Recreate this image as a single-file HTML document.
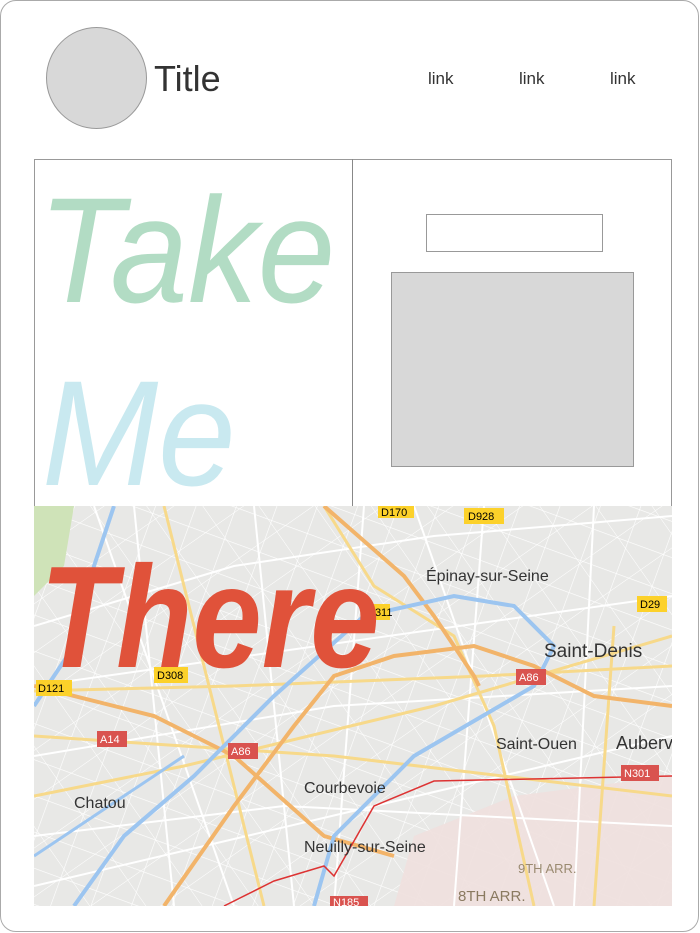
<!DOCTYPE html>
<html><head><meta charset="utf-8"><style>
html,body{margin:0;padding:0;background:#fff;}
body{width:700px;height:933px;position:relative;overflow:hidden;font-family:"Liberation Sans",sans-serif;}
.card{position:absolute;left:0;top:0;width:697px;height:930px;border:1px solid #aaa;border-radius:16px;}
.circ{position:absolute;left:46px;top:27px;width:99px;height:100px;border-radius:50%;background:#d8d8d8;border:1px solid #999;}
.title{position:absolute;left:154px;top:58px;font-size:36px;color:#333;}
.link{position:absolute;top:69px;font-size:17px;color:#333;}
.grid{position:absolute;left:34px;top:159px;width:636px;height:347px;border:1px solid #999;border-bottom:none;}
.div{position:absolute;left:352px;top:159px;width:1px;height:347px;background:#888;}
.inp{position:absolute;left:426px;top:214px;width:175px;height:36px;border:1px solid #999;}
.gbox{position:absolute;left:391px;top:272px;width:241px;height:193px;background:#d8d8d8;border:1px solid #999;}
.big{position:absolute;font-style:italic;white-space:nowrap;line-height:1;}
.map{position:absolute;left:34px;top:506px;}
</style></head><body>
<div class="card"></div>
<div class="circ"></div>
<div class="title">Title</div>
<div class="link" style="left:428px">link</div>
<div class="link" style="left:519px">link</div>
<div class="link" style="left:610px">link</div>
<div class="grid"></div>
<div class="div"></div>
<div class="inp"></div>
<div class="gbox"></div>
<div class="big" style="left:38px;top:175px;font-size:150px;color:#b2dcc4;transform:scaleX(0.93);transform-origin:left;">Take</div>
<div class="big" style="left:42px;top:358px;font-size:150px;color:#c9e9f0;transform:scaleX(0.93);transform-origin:left;">Me</div>
<svg class="map" width="638" height="400" viewBox="0 0 638 400">
<defs>
<pattern id="st" width="38" height="34" patternUnits="userSpaceOnUse" patternTransform="rotate(20)">
<path d="M0 0 L38 0 M0 0 L0 34" stroke="#fff" stroke-width="1.2" fill="none"/>
</pattern>
<pattern id="st2" width="46" height="40" patternUnits="userSpaceOnUse" patternTransform="rotate(-35)">
<path d="M0 0 L46 0 M0 0 L0 40" stroke="#fff" stroke-width="1" fill="none"/>
</pattern>
</defs>
<rect width="638" height="400" fill="#e8e8e6"/>
<rect width="638" height="400" fill="url(#st)"/>
<rect width="638" height="400" fill="url(#st2)"/>
<path d="M0 0 L40 0 L30 60 L0 90Z" fill="#cfe3b8"/>
<path d="M380 330 L480 290 L638 270 L638 400 L360 400Z" fill="#f0e0de" opacity="0.9"/>
<g stroke="#fff" stroke-width="2" fill="none">
<path d="M0 120 L200 60 L400 30 L638 10"/><path d="M0 250 L300 200 L638 180"/><path d="M0 330 L250 300 L638 320"/>
<path d="M100 0 L140 400"/><path d="M220 0 L260 400"/><path d="M330 0 L300 400"/><path d="M450 0 L420 400"/><path d="M560 0 L540 400"/>
<path d="M0 180 L638 90"/><path d="M0 380 L638 230"/><path d="M60 0 L200 400"/><path d="M380 0 L520 400"/>
</g>
<g stroke="#f7d98a" stroke-width="3" fill="none">
<path d="M0 185 L200 180 L450 170 L638 160"/><path d="M0 230 L300 250 L638 290"/><path d="M130 0 L180 200 L230 400"/>
<path d="M290 0 L340 80 L420 130 L460 220 L500 400"/><path d="M0 290 L150 260 L400 200 L638 130"/><path d="M580 120 L560 400"/>
</g>
<g stroke="#f2b46a" stroke-width="4" fill="none">
<path d="M0 180 L120 210 L200 250 L290 330 L360 350"/><path d="M130 400 L200 300 L260 220 L300 170 L360 150 L440 140 L500 160 L560 190 L638 200"/>
<path d="M290 0 L370 70 L400 110 L440 170 L445 180"/>
</g>
<path d="M80 0 L60 60 L40 140 L0 200" stroke="#9cc5f0" stroke-width="4" fill="none"/>
<path d="M40 400 L90 330 L160 270 L240 190 L330 110 L420 90 L480 100 L520 140 L500 180 L380 250 L300 330 L280 400" stroke="#9cc5f0" stroke-width="4" fill="none"/>
<path d="M0 350 L150 250" stroke="#9cc5f0" stroke-width="3" fill="none"/>
<path d="M190 400 L240 375 L290 360 L300 370 L340 300 L400 275 L638 270" stroke="#d33" stroke-width="1.5" fill="none"/>
<g font-family="Liberation Sans,sans-serif" font-size="16" fill="#333">
<text x="392" y="75">Épinay-sur-Seine</text><text x="510" y="151" font-size="19">Saint-Denis</text>
<text x="462" y="243">Saint-Ouen</text><text x="582" y="243" font-size="18">Auberv</text>
<text x="270" y="287">Courbevoie</text><text x="40" y="302">Chatou</text><text x="270" y="346">Neuilly-sur-Seine</text>
<text x="484" y="367" font-size="13" fill="#9a8a70">9TH ARR.</text><text x="424" y="395" font-size="15" fill="#8a7a60">8TH ARR.</text>
</g>
<g font-family="Liberation Sans,sans-serif" font-size="11">
<rect x="344" y="0" width="36" height="12" fill="#fcd12a"/><text x="347" y="10">D170</text>
<rect x="430" y="2" width="40" height="16" fill="#fcd12a"/><text x="434" y="14">D928</text>
<rect x="603" y="90" width="30" height="16" fill="#fcd12a"/><text x="606" y="102">D29</text>
<rect x="120" y="161" width="34" height="16" fill="#fcd12a"/><text x="123" y="173">D308</text>
<rect x="2" y="174" width="36" height="16" fill="#fcd12a"/><text x="4" y="186">D121</text>
<rect x="330" y="98" width="26" height="16" fill="#fcd12a"/><text x="333" y="110">D311</text>
<rect x="482" y="163" width="30" height="16" fill="#d9534f"/><text x="485" y="175" fill="#fff">A86</text>
<rect x="63" y="225" width="30" height="16" fill="#d9534f"/><text x="66" y="237" fill="#fff">A14</text>
<rect x="194" y="237" width="30" height="16" fill="#d9534f"/><text x="197" y="249" fill="#fff">A86</text>
<rect x="587" y="259" width="38" height="16" fill="#d9534f"/><text x="590" y="271" fill="#fff">N301</text>
<rect x="296" y="390" width="38" height="12" fill="#d9534f"/><text x="299" y="400" fill="#fff">N185</text>
</g>
</svg>
<div class="big" style="left:40px;top:545px;font-size:145px;font-weight:bold;color:#e0523a;transform:scaleX(0.86);transform-origin:left;">There</div>
</body></html>
